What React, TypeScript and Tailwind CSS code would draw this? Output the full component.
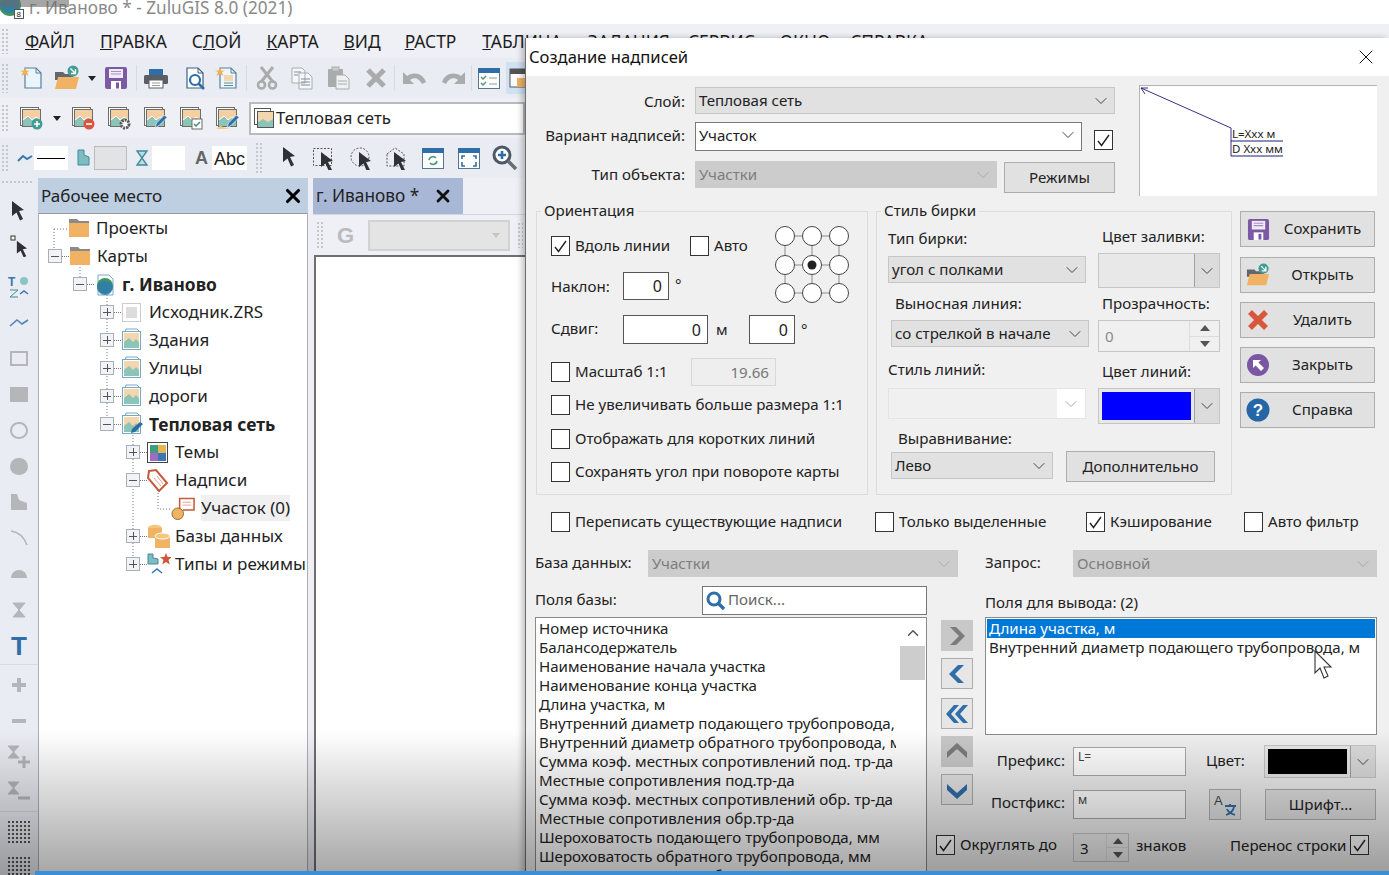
import type { ReactNode } from "react";
import { ChevronDown, ChevronUp, X } from "lucide-react";

const GRAY = "#a9abad";

function Ico({ w = 24, h = 24, className = "", children }: { w?: number; h?: number; className?: string; children: ReactNode }) {
  return (
    <svg width={w} height={h} viewBox={`0 0 ${w} ${h}`} className={"shrink-0 " + className}>
      {children}
    </svg>
  );
}

function Grip({ className = "" }: { className?: string }) {
  return <div className={"shrink-0 bg-[radial-gradient(#c3c7ce_1px,transparent_1.3px)] bg-[length:4px_4px] " + className} />;
}

/* toolbar pictures */
const Star = ({ x = 5, y = 5 }: { x?: number; y?: number }) => (
  <path transform={`translate(${x} ${y})`} d="M0-5L1.2-1.6 5-1.2 2-.0 3.5 4 0 2 -3.5 4 -2 0 -5-1.2 -1.2-1.6Z" fill="#f3b04c" />
);
const Floppy = ({ size = 24 }: { size?: number }) => (
  <svg width={size} height={size} viewBox="0 0 24 24" className="shrink-0">
    <path d="M1 3a2 2 0 012-2h18a2 2 0 012 2v18a2 2 0 01-2 2H3a2 2 0 01-2-2z" fill="#7b59a4" />
    <rect x="5" y="3" width="14" height="9" fill="#efeaf5" />
    <path d="M7 5.5h10M7 8h10" stroke="#a78fc4" strokeWidth="1.2" />
    <rect x="7" y="15" width="10" height="8" fill="#fff" />
    <rect x="12" y="16.5" width="3" height="6" fill="#7b59a4" />
  </svg>
);
const FolderArrow = ({ size = 26 }: { size?: number }) => (
  <svg width={size} height={size} viewBox="0 0 26 26" className="shrink-0">
    <path d="M1 7h8l2 2h8v6H1z" fill="#63676d" />
    <path d="M4 12h21l-3 12H1z" fill="#f1b263" />
    <circle cx="19" cy="6" r="5.5" fill="#3f9d93" />
    <path d="M16.5 3.5l4.5 4.5M21.5 4v4.5H17" stroke="#fff" strokeWidth="1.4" fill="none" />
  </svg>
);
const Doc = ({ children, fill = "#fff", stroke = "#3c5f80" }: { children?: ReactNode; fill?: string; stroke?: string }) => (
  <>
    <path d="M6 2h11l5 5v15H6z" fill={fill} stroke={stroke} strokeWidth="1.2" />
    <path d="M17 2v5h5" fill="none" stroke={stroke} strokeWidth="1" />
    {children}
  </>
);
const Layer = ({ children }: { children?: ReactNode }) => (
  <Ico>
    <rect x="1.5" y="1.5" width="18" height="18" fill="#fff" stroke="#6d6d6d" />
    <rect x="3.5" y="3.5" width="18" height="17" fill="#f5cfa2" stroke="#6d6d6d" />
    <path d="M4 20v-6l5-4 4 4 4-3 4 3v6z" fill="#8cc5b8" />
    <path d="M4 14l5-4 4 4 4-3 4 3" fill="none" stroke="#fff" strokeWidth="1" />
    {children}
  </Ico>
);
const LayerSmall = ({ pen = false }: { pen?: boolean }) => (
  <Ico w={22} h={24}>
    <path d="M4 4l1-3h11l3 3" fill="#fff" stroke="#76a9c4" />
    <rect x="1.5" y="3.5" width="18" height="18" fill="#fff" stroke="#76a9c4" />
    <rect x="3" y="5" width="15" height="15" fill="#f3d6ae" />
    <path d="M3 20v-6l5-4 4 4 3-3 3 3v6z" fill="#8cc5b8" />
    {pen && <path d="M10 21l1-4 8-7 3 2-8 8z" fill="#2e6da4" />}
  </Ico>
);
const PenBlue = () => <path d="M12 22l1.5-5 8-8 2.5 2.5-8 8z" fill="#2f6ea8" stroke="#fff" strokeWidth=".6" />;

function WindowIcon({ children }: { children: ReactNode }) {
  return (
    <Ico w={22} h={24}>
      <rect x=".5" y="2.5" width="21" height="20" fill="#fff" stroke="#5a7489" />
      <rect x="0" y="2" width="22" height="5" fill="#2f6ea8" />
      {children}
    </Ico>
  );
}
const Cursor = ({ x = 0, y = 0, s = 1 }: { x?: number; y?: number; s?: number }) => (
  <path transform={`translate(${x} ${y}) scale(${s})`} d="M1 1l12 9-5 1 4 8-3 1.5-3.5-8L1 16z" fill="#2f3033" />
);

function MenuItem({ first, rest, className = "" }: { first: string; rest: string; className?: string }) {
  return (
    <span className={"whitespace-nowrap " + className}>
      {rest[0] === "!" ? (
        <>
          {first}
          <span className="underline">{rest[1]}</span>
          {rest.slice(2)}
        </>
      ) : (
        <>
          <span className="underline">{first}</span>
          {rest}
        </>
      )}
    </span>
  );
}

function Toolbars() {
  return (
    <div className="bg-[#eef0f5]">
      <div className="h-[24px] bg-white flex items-start relative">
        <svg width="26" height="24" viewBox="0 0 26 24" className="shrink-0">
          <circle cx="10" cy="5" r="11" fill="#3e9260" />
          <path d="M0 6a10 10 0 0019 0 9 8 0 00-19 0" fill="#2f79b7" opacity=".75" />
          <rect x="14.5" y="9.5" width="9" height="9" fill="#fff" stroke="#555" />
          <text x="16.5" y="17" fontSize="8" fill="#222" fontFamily="Liberation Sans, sans-serif">8</text>
        </svg>
        <span className="ml-[3px] -mt-[3px] text-[17.2px] leading-[22px] text-[#8a8a8a] whitespace-nowrap">г. Иваново * - ZuluGIS 8.0 (2021)</span>
        <div className="absolute left-0 top-0 w-[69px] h-[7px] bg-[#6b6b6b]/60" />
      </div>

      <div className="h-[34px] flex items-center text-[17.4px] text-[#1d1d1d] relative">
        <Grip className="w-[8px] h-[26px] ml-[1px]" />
        <MenuItem first="Ф" rest="АЙЛ" className="ml-[16px]" />
        <MenuItem first="П" rest="РАВКА" className="ml-[25px]" />
        <MenuItem first="С" rest="!ЛОЙ" className="ml-[25px]" />
        <MenuItem first="К" rest="АРТА" className="ml-[25px]" />
        <MenuItem first="В" rest="ИД" className="ml-[25px]" />
        <MenuItem first="Р" rest="АСТР" className="ml-[24px]" />
        <MenuItem first="Т" rest="АБЛИЦА" className="ml-[26px]" />
        <MenuItem first="З" rest="АДАНИЯ" className="ml-[26px]" />
        <MenuItem first="С" rest="ЕРВИС" className="ml-[18px]" />
        <MenuItem first="О" rest="КНО" className="ml-[25px]" />
        <MenuItem first="С" rest="ПРАВКА" className="ml-[20px]" />
      </div>

      {/* row 1 */}
      <div className="h-[40px] flex items-center bg-[#e9ecf2]">
        <Grip className="w-[8px] h-[30px] ml-[1px]" />
        <Ico className="ml-[10px]" w={26}>
          <Doc fill="#e9f4fb" stroke="#5a7f9c" />
          <Star x={6} y={6} />
        </Ico>
        <div className="ml-[9px]"><FolderArrow /></div>
        <div className="ml-[8px] w-0 h-0 border-x-[4px] border-x-transparent border-t-[5px] border-t-[#222]" />
        <div className="ml-[8px]"><Floppy /></div>
        <div className="ml-[8px] w-px h-[26px] bg-[#d8dbe0]" />
        <Ico className="ml-[6px]" w={26}>
          <rect x="6" y="3" width="14" height="7" fill="#2f6ea8" />
          <rect x="1" y="9" width="24" height="9" rx="1.5" fill="#5a5f66" />
          <rect x="6" y="14" width="14" height="8" fill="#fff" stroke="#5a5f66" />
          <path d="M9 17h8M9 19.5h8" stroke="#999" />
        </Ico>
        <Ico className="ml-[12px]">
          <Doc><circle cx="14" cy="14" r="5" fill="#fff" stroke="#2f6ea8" strokeWidth="2.2" /><path d="M17.5 17.5L23 23" stroke="#2f6ea8" strokeWidth="2.6" /></Doc>
        </Ico>
        <Ico className="ml-[9px]" w={26}>
          <Doc fill="#eef6fb" stroke="#5a7f9c"><rect x="10" y="9" width="9" height="6" fill="#f3d6ae" /><path d="M10 17h9M10 19.5h9" stroke="#5a8f96" /></Doc>
          <Star x={6} y={6} />
        </Ico>
        <div className="ml-[6px] w-px h-[26px] bg-[#d8dbe0]" />
        <Ico className="ml-[8px]">
          <path d="M6 1l12 15M18 1L6 16" stroke={GRAY} strokeWidth="3" />
          <circle cx="6.5" cy="19" r="3.5" fill="none" stroke={GRAY} strokeWidth="2.6" />
          <circle cx="17.5" cy="19" r="3.5" fill="none" stroke={GRAY} strokeWidth="2.6" />
        </Ico>
        <Ico className="ml-[11px]">
          <path d="M2 2h10l3 3v12H2zM9 7h9l4 4v12H9z" fill="#f6f7f9" stroke={GRAY} />
          <path d="M4 6h7M4 9h4M11 13h9M11 16h9M11 19h9" stroke="#7d8ea0" />
        </Ico>
        <Ico className="ml-[12px]">
          <rect x="2" y="3" width="15" height="18" rx="1" fill={GRAY} />
          <rect x="6" y="1" width="7" height="4" fill="#c9cbce" stroke={GRAY} />
          <path d="M10 9h9l4 4v10H10z" fill="#eef0f3" stroke={GRAY} />
          <path d="M12 15h9M12 18h9" stroke={GRAY} />
        </Ico>
        <Ico className="ml-[14px]">
          <path d="M4 4l16 16M20 4L4 20" stroke={GRAY} strokeWidth="5" />
        </Ico>
        <div className="ml-[6px] w-px h-[26px] bg-[#d8dbe0]" />
        <Ico className="ml-[7px]" w={26}>
          <path d="M1 6v12h11l-4-4c4-3 9-2 12 4l4-2c-3-8-11-11-19-6z" fill={GRAY} />
        </Ico>
        <Ico className="ml-[12px]" w={26}>
          <path d="M25 6v12H14l4-4c-4-3-9-2-12 4l-4-2c3-8 11-11 19-6z" fill={GRAY} />
        </Ico>
        <div className="ml-[5px] w-px h-[26px] bg-[#d8dbe0]" />
        <div className="ml-[6px]">
          <WindowIcon>
            <path d="M3 11l2 2 3-3M3 17l2 2 3-3" stroke="#4d9a7c" strokeWidth="1.5" fill="none" />
            <path d="M11 12h8M11 18h8" stroke="#8a99a8" />
          </WindowIcon>
        </div>
        <div className="ml-[6px] w-[32px] h-[32px] bg-[#cfe2f3] flex items-center pl-[3px]">
          <Ico w={20}>
            <rect x="1" y="3" width="17" height="18" fill="#fff" stroke="#555" />
            <rect x="1" y="3" width="17" height="5" fill="#555" />
            <rect x="8" y="12" width="12" height="9" fill="#f1b263" />
          </Ico>
        </div>
      </div>

      {/* row 2 */}
      <div className="h-[40px] flex items-center bg-[#eef0f5]">
        <Grip className="w-[8px] h-[28px] ml-[1px]" />
        <div className="ml-[10px]"><Layer><circle cx="18" cy="18" r="5.5" fill="#3f9d93" /><path d="M15 18h6M18 15v6" stroke="#fff" strokeWidth="1.6" /></Layer></div>
        <div className="ml-[10px] w-0 h-0 border-x-[4px] border-x-transparent border-t-[5px] border-t-[#222]" />
        <div className="ml-[10px]"><Layer><circle cx="18" cy="18" r="5.5" fill="#d9553e" /><path d="M15 18h6" stroke="#fff" strokeWidth="1.6" /></Layer></div>
        <div className="ml-[12px]"><Layer><circle cx="18" cy="18" r="4" fill="#fff" stroke="#555" strokeWidth="3" strokeDasharray="2 1" /></Layer></div>
        <div className="ml-[12px]"><Layer><PenBlue /></Layer></div>
        <div className="ml-[12px]"><Layer><rect x="13" y="13" width="10" height="10" fill="#fff" stroke="#6d6d6d" /><path d="M15 18l2 2 4-4" stroke="#3f8f7c" strokeWidth="1.5" fill="none" /></Layer></div>
        <div className="ml-[12px]"><Layer><path d="M1 23l4-3 10 3z" fill="#f3cf85" /><PenBlue /></Layer></div>
        <div className="ml-[10px] w-[276px] h-[33px] bg-white border-2 border-[#b8babd] flex items-center pl-[2px]">
          <Ico w={22} h={22}>
            <rect x="1.5" y="1.5" width="16" height="16" fill="#fff" stroke="#555" />
            <rect x="4.5" y="4.5" width="16" height="16" fill="#f3d6ae" stroke="#555" />
            <path d="M5 20v-5l5-3 5 3 5-3v8z" fill="#8cc5b8" />
          </Ico>
          <span className="ml-[1px] text-[16.8px] text-[#1f1f1f] whitespace-nowrap">Тепловая сеть</span>
        </div>
      </div>

      {/* row 3 */}
      <div className="h-[40px] flex items-center bg-[#e9ecf2]">
        <Grip className="w-[8px] h-[28px] ml-[1px]" />
        <Ico className="ml-[8px]" w={16}>
          <path d="M1 15l5-5 4 3 5-3" fill="none" stroke="#3a77ad" strokeWidth="2" />
        </Ico>
        <div className="ml-[1px] w-[34px] h-[24px] bg-white flex items-center justify-center"><div className="w-[28px] h-px bg-black" /></div>
        <Ico className="ml-[8px]" w={16}>
          <path d="M2 4h6v5l5 2v8H2z" fill="#7fbcc2" stroke="#3f8b9c" />
        </Ico>
        <div className="ml-[2px] w-[33px] h-[24px] bg-[#e2e3e5] border border-[#bbb]" />
        <Ico className="ml-[8px]" w={14}>
          <path d="M2 5h10L2 19h10z" fill="#b9dde0" stroke="#3f8b9c" strokeWidth="1.4" />
        </Ico>
        <div className="ml-[3px] w-[33px] h-[24px] bg-white" />
        <span className="ml-[10px] w-[15px] text-[18px] font-bold text-[#666] font-['Liberation_Sans',sans-serif]">A</span>
        <div className="ml-[2px] w-[35px] h-[24px] bg-white text-[18px] leading-[26px] text-[#222] text-center font-['Liberation_Sans',sans-serif]">Abc</div>
        <Grip className="ml-[8px] w-[8px] h-[32px]" />
        <Ico className="ml-[19px]" w={16}><Cursor /></Ico>
        <Ico className="ml-[15px]" w={22}>
          <rect x=".5" y="2.5" width="18" height="17" fill="none" stroke="#555" strokeDasharray="2 1.5" />
          <Cursor x={7} y={5} />
        </Ico>
        <Ico className="ml-[15px]">
          <circle cx="10" cy="11" r="9" fill="none" stroke="#555" strokeDasharray="2 1.5" />
          <Cursor x={8} y={5} />
        </Ico>
        <Ico className="ml-[12px]" w={22}>
          <path d="M1 8l8-6 9 6v12H1z" fill="none" stroke="#555" strokeDasharray="2 1.5" />
          <Cursor x={7} y={5} />
        </Ico>
        <div className="ml-[14px]">
          <WindowIcon>
            <path d="M7 14a4 4 0 017-2M15 15a4 4 0 01-7 2" stroke="#4d9a7c" strokeWidth="1.8" fill="none" />
          </WindowIcon>
        </div>
        <div className="ml-[14px]">
          <WindowIcon>
            <path d="M4 13v-3h3M18 13v-3h-3M4 16v4h3M18 16v4h-3" stroke="#2f6ea8" strokeWidth="1.6" fill="none" />
          </WindowIcon>
        </div>
        <Ico className="ml-[12px]" w={26} h={26}>
          <circle cx="10" cy="10" r="8" fill="#fff" stroke="#4d5a66" strokeWidth="3" />
          <path d="M6 10h8M10 6v8" stroke="#2f6ea8" strokeWidth="2.6" />
          <path d="M16 16l8 8" stroke="#6a6e73" strokeWidth="3.5" />
        </Ico>
      </div>
    </div>
  );
}

function LeftStrip() {
  const g = "#b4b6ba";
  const cell = "h-[36px] shrink-0 flex items-center justify-center";
  return (
    <div className="w-[38px] shrink-0 bg-[#e9ecf2] flex flex-col overflow-hidden">
      <Grip className="h-[4px] w-[32px] ml-[1px] mt-[2px] mb-[9px]" />
      <div className="h-[35px] shrink-0 flex items-center justify-center"><Ico w={16} h={22}><Cursor /></Ico></div>
      <div className="h-[34px] shrink-0 flex items-center justify-center">
        <Ico w={22}>
          <rect x="3" y="3" width="4" height="4" fill="#fff" stroke="#333" />
          <Cursor x={8} y={7} s={.85} />
        </Ico>
      </div>
      <div className="h-[42px] shrink-0 pt-[6px] flex items-center justify-center">
        <Ico>
          <text x="1" y="12" fontSize="12" fontWeight="700" fill="#3a77ad" fontFamily="Liberation Sans, sans-serif">T</text>
          <circle cx="17" cy="7" r="4" fill="#8cc5c8" />
          <path d="M3 16h8L3 23h8" stroke="#3f8b9c" fill="none" />
          <path d="M13 20l4-3 4 3" stroke="#3a77ad" fill="none" strokeWidth="1.5" />
        </Ico>
      </div>
      <div className={cell}><Ico h={16}><path d="M3 12l7-6 5 4 6-4" fill="none" stroke="#4d86b8" strokeWidth="1.6" /></Ico></div>
      <div className={cell}><div className="w-[18px] h-[15px] border-2 border-[#b4b6ba]" /></div>
      <div className={cell}><div className="w-[18px] h-[15px] bg-[#b4b6ba]" /></div>
      <div className={cell}><div className="w-[18px] h-[17px] rounded-full border-2 border-[#b4b6ba]" /></div>
      <div className={cell}><div className="w-[18px] h-[17px] rounded-full bg-[#b4b6ba]" /></div>
      <div className={cell}><Ico w={18} h={18}><path d="M1 1h6l2 6 8 3v7H1z" fill={g} /></Ico></div>
      <div className={cell}><Ico w={20} h={18}><path d="M2 2c7 1 13 6 16 14" fill="none" stroke={g} strokeWidth="1.6" /></Ico></div>
      <div className={cell}><Ico w={20} h={12}><path d="M2 10a8 8 0 0116 0z" fill={g} /></Ico></div>
      <div className={cell}><Ico w={14} h={16}><path d="M1 1h12L1 15h12z" fill={g} stroke={g} /></Ico></div>
      <div className={cell}><span className="text-[26px] font-bold text-[#2f6ea8] font-['Liberation_Sans',sans-serif]">T</span></div>
      <div className="h-[3px] shrink-0 border-t border-[#d8dbe0]" />
      <div className={cell}><Ico w={16} h={16}><path d="M8 1v14M1 8h14" stroke={g} strokeWidth="4" /></Ico></div>
      <div className={cell}><div className="w-[14px] h-[4px] bg-[#b4b6ba]" /></div>
      <div className={cell}>
        <Ico><path d="M1 1h11L1 13h11z" fill={g} stroke={g} /><path d="M17 11v12M11 17h12" stroke={g} strokeWidth="3" /></Ico>
      </div>
      <div className={cell}>
        <Ico><path d="M1 1h11L1 13h11z" fill={g} stroke={g} /><path d="M11 17h12" stroke={g} strokeWidth="3" /></Ico>
      </div>
      <div className="h-[3px] shrink-0 border-t border-[#d8dbe0]" />
      <div className={cell}><div className="w-[24px] h-[24px] bg-[radial-gradient(#555_1px,transparent_1.3px)] bg-[length:4px_4px]" /></div>
      <div className={cell}><div className="w-[24px] h-[24px] bg-[radial-gradient(#555_1px,transparent_1.3px)] bg-[length:4px_4px]" /></div>
    </div>
  );
}

function Expander({ open }: { open: boolean }) {
  return (
    <span className="relative w-[14px] h-[14px] shrink-0 bg-[#f1f3f6] border border-[#a9aeb8] flex items-center justify-center">
      <span className="absolute w-[8px] h-px bg-[#555]" />
      {!open && <span className="absolute h-[8px] w-px bg-[#555]" />}
    </span>
  );
}

function TreeRow({ indent, open, icon, text, bold, hi }: { indent: string; open?: boolean; icon: ReactNode; text: string; bold?: boolean; hi?: boolean }) {
  return (
    <div className={"h-[28px] flex items-center " + indent}>
      {open !== undefined && (
        <>
          <Expander open={open} />
          <span className="w-[7px] shrink-0 border-t border-dotted border-[#777]" />
        </>
      )}
      <div className={open === undefined ? "shrink-0" : "w-[22px] shrink-0"}>{icon}</div>
      <span className={"ml-[6px] whitespace-nowrap " + (bold ? "font-bold text-[17.4px] " : "") + (hi ? "bg-[#f0f0f0] " : "")}>{text}</span>
    </div>
  );
}

const FolderTree = () => (
  <Ico w={22} h={22}>
    <path d="M1 2h8l2 2h10v4H1z" fill="#8a8a8a" />
    <path d="M1 6h20v14H1z" fill="#f1b263" />
  </Ico>
);

function WorkPanel() {
  return (
    <div className="w-[270px] shrink-0 flex flex-col">
      <div className="h-[35px] bg-[#bfcfe2] flex items-center justify-between pl-[3px] pr-[4px]">
        <span className="text-[17px] text-[#222]">Рабочее место</span>
        <X size={22} strokeWidth={3.4} className="text-black" />
      </div>
      <div className="relative flex-1 bg-white border border-t-[#999] border-x-[#aab0b8] border-b-0 text-[17px] text-[#222] overflow-hidden">
        <svg width="150" height="360" className="absolute left-0 top-0" fill="none" stroke="#777" strokeDasharray="1 2">
          <path d="M15 15V38M15 15h14M41 50V71M68 78V207M94 218V351M119 267V295h14" />
        </svg>
        <div className="relative">
          <TreeRow indent="ml-[29px]" icon={<FolderTree />} text="Проекты" />
          <TreeRow indent="ml-[9px]" open icon={<FolderTree />} text="Карты" />
          <TreeRow indent="ml-[34px]" open icon={
            <Ico w={22} h={24}>
              <path d="M4 3h11l4 4v16H4z" fill="#fff" stroke="#76a9c4" />
              <circle cx="11" cy="14" r="8" fill="#3f9660" />
              <path d="M3 15a8 8 0 0016 0 8 6 0 00-16 0" fill="#2f79b7" opacity=".8" />
            </Ico>
          } text="г. Иваново" bold />
          <TreeRow indent="ml-[61px]" open={false} icon={
            <Ico w={22} h={24}>
              <rect x="1.5" y="3.5" width="18" height="18" fill="#fff" stroke="#ccc" />
              <rect x="5" y="7" width="11" height="11" fill="#ddd" />
            </Ico>
          } text="Исходник.ZRS" />
          <TreeRow indent="ml-[61px]" open={false} icon={<LayerSmall />} text="Здания" />
          <TreeRow indent="ml-[61px]" open={false} icon={<LayerSmall />} text="Улицы" />
          <TreeRow indent="ml-[61px]" open={false} icon={<LayerSmall />} text="дороги" />
          <TreeRow indent="ml-[61px]" open icon={<LayerSmall pen />} text="Тепловая сеть" bold />
          <TreeRow indent="ml-[87px]" open={false} icon={
            <Ico w={22} h={24}>
              <rect x=".5" y="2.5" width="20" height="20" fill="#fff" stroke="#444" />
              <rect x="3" y="5" width="8" height="8" fill="#3f9d7f" />
              <rect x="11" y="5" width="8" height="8" fill="#e5b84f" />
              <rect x="3" y="13" width="8" height="8" fill="#a06bc0" />
              <rect x="11" y="13" width="8" height="8" fill="#3b76b5" />
            </Ico>
          } text="Темы" />
          <TreeRow indent="ml-[87px]" open icon={
            <Ico w={22} h={24}>
              <path d="M2 3l7-1 11 13-8 8L1 10z" fill="#fff" stroke="#c65a3c" strokeWidth="2" />
              <path d="M7 10l7 8M10 8l6 8" stroke="#e3a48f" />
            </Ico>
          } text="Надписи" />
          <TreeRow indent="ml-[132px]" icon={
            <svg width="24" height="26" viewBox="0 0 25 26" className="shrink-0">
              <path d="M9 3h15v12H13l-4 3z" fill="#fff" stroke="#c65a3c" strokeWidth="1.6" />
              <path d="M12 7h9M12 10h9" stroke="#e3a48f" />
              <circle cx="7" cy="19" r="6" fill="#f1b263" stroke="#8a6a35" />
            </svg>
          } text="Участок (0)" hi />
          <TreeRow indent="ml-[87px]" open={false} icon={
            <Ico w={24} h={26}>
              <ellipse cx="8" cy="5" rx="7" ry="3.2" fill="#f6c67e" />
              <rect x="1" y="5" width="14" height="10" fill="#f1b263" />
              <rect x="8" y="13" width="15" height="12" fill="#f1b263" />
              <ellipse cx="15.5" cy="13" rx="7.5" ry="3" fill="#f6c67e" stroke="#fff" />
            </Ico>
          } text="Базы данных" />
          <TreeRow indent="ml-[87px]" open={false} icon={
            <Ico w={24} h={26}>
              <path d="M1 3h5v4l5 1v5H1z" fill="#7fbcc2" stroke="#3f8b9c" />
              <path d="M19 2l1.6 4H25l-3.5 3 1.3 4.5L19 11l-3.8 2.5L16.5 9 13 6h4.4z" fill="#d0563a" />
              <path d="M5 22l5-4 5 4" stroke="#3a77ad" strokeWidth="1.6" fill="none" />
            </Ico>
          } text="Типы и режимы" />
        </div>
      </div>
    </div>
  );
}

function MapArea() {
  return (
    <div className="flex-1 flex flex-col ml-[5px]">
      <div className="h-[36px] w-[150px] bg-[#a9b7d7] flex items-center pl-[3px] pr-[10px] justify-between text-[17.3px] text-[#222]">
        <span className="whitespace-nowrap">г. Иваново *</span>
        <X size={20} strokeWidth={3.4} className="text-[#111]" />
      </div>
      <div className="h-[41px] bg-[#eef0f5] flex items-center border-t border-[#d4d6da]">
        <Grip className="ml-[3px] w-[8px] h-[28px]" />
        <span className="ml-[13px] w-[28px] text-[22px] font-bold text-[#b9bbbe] font-['Liberation_Sans',sans-serif]">G</span>
        <div className="ml-[3px] w-[142px] h-[31px] bg-[#e4e4e4] border-2 border-[#d2d2d2] flex items-center justify-end pr-[8px]">
          <div className="w-0 h-0 border-x-[4px] border-x-transparent border-t-[5px] border-t-[#c5c5c5]" />
        </div>
        <Grip className="ml-[7px] w-[6px] h-[26px]" />
      </div>
      <div className="flex-1 bg-white border-l-2 border-t-2 border-[#6f6f6f] ml-px" />
    </div>
  );
}

/* ---- dialog controls ---- */

function Check({ on, className = "" }: { on?: boolean; className?: string }) {
  return (
    <span className={"w-[19px] h-[20px] shrink-0 bg-white border border-[#333] flex items-center justify-center " + className}>
      {on && (
        <svg width="15" height="15" viewBox="0 0 15 15"><path d="M2 8l3.5 4.5L13 2" fill="none" stroke="#222" strokeWidth="1.4" /></svg>
      )}
    </span>
  );
}

function CheckLine({ on, text, className = "" }: { on?: boolean; text: string; className?: string }) {
  return (
    <div className={"flex items-center h-[20px] " + className}>
      <Check on={on} />
      <span className="ml-[5px] pb-[2px] whitespace-nowrap">{text}</span>
    </div>
  );
}

function Select({ text, className, tone = "gray" }: { text?: string; className: string; tone?: "gray" | "white" | "off" }) {
  const look = tone === "gray" ? "bg-[#e1e1e1] border border-[#c6c6c6]" : tone === "white" ? "bg-white border border-[#7a7a7a]" : "bg-[#cccccc] border border-[#cccccc]";
  return (
    <div className={"flex items-center justify-between shrink-0 pl-[3px] pr-[3px] " + look + " " + className}>
      <span className={"whitespace-nowrap " + (tone === "off" ? "text-[#7d7d7d]" : "")}>{text}</span>
      <ChevronDown size={20} strokeWidth={1.2} className={tone === "off" ? "text-[#a8a8a8]" : "text-[#444]"} />
    </div>
  );
}

function Btn({ text, className }: { text: string; className: string }) {
  return <div className={"shrink-0 bg-[#e1e1e1] border border-[#adadad] flex items-center justify-center whitespace-nowrap " + className}>{text}</div>;
}

function ColorBox({ className, swatch }: { className: string; swatch: string }) {
  return (
    <div className={"shrink-0 flex items-stretch bg-[#e8e8e8] border border-[#c6c6c6] p-[3px] " + className}>
      <div className={"flex-1 " + swatch} />
      <div className="w-[25px] ml-[3px] -my-[3px] -mr-[3px] bg-[#dcdcdc] border-l border-[#a0a0a0] flex items-center justify-center">
        <ChevronDown size={20} strokeWidth={1.2} className="text-[#444]" />
      </div>
    </div>
  );
}

function Spin({ value, className, w = "w-[25px]", off }: { value: string; className: string; w?: string; off?: boolean }) {
  return (
    <div className={"shrink-0 flex items-center border border-[#c6c6c6] pl-[6px] " + (off ? "bg-[#f0f0f0] text-[#8a8a8a] " : "bg-[#efefef] ") + className}>
      <span className="flex-1">{value}</span>
      <div className={"self-stretch flex flex-col " + w}>
        <div className="flex-1 flex items-center justify-center border-b border-[#ddd] border-l">
          <div className="w-0 h-0 border-x-[5px] border-x-transparent border-b-[6px] border-b-[#555]" />
        </div>
        <div className="flex-1 flex items-center justify-center border-l border-[#ddd]">
          <div className="w-0 h-0 border-x-[5px] border-x-transparent border-t-[6px] border-t-[#555]" />
        </div>
      </div>
    </div>
  );
}

function Num({ value, className }: { value: string; className: string }) {
  return <div className={"shrink-0 bg-white border border-[#555] flex items-center justify-end pr-[6px] text-[16px] text-[#222] " + className}>{value}</div>;
}

function SideBtn({ icon, text, className = "" }: { icon: ReactNode; text: string; className?: string }) {
  return (
    <div className={"h-[36px] w-[135px] bg-[#e1e1e1] border border-[#adadad] flex items-center pl-[5px] " + className}>
      <span className="w-[24px] flex justify-center">{icon}</span>
      <span className="flex-1 text-center pl-[1px] pb-[2px]">{text}</span>
    </div>
  );
}

function Arrow({ d, className, off }: { d: string; className?: string; off?: boolean }) {
  return (
    <div className={"h-[31px] w-[32px] flex items-center justify-center border " + (off ? "bg-[#c8c8c8] border-[#c8c8c8] " : "bg-[#e6e6e6] border-[#adadad] ") + className}>
      <svg width="26" height="22" viewBox="0 0 26 22"><path d={d} fill={off ? "#7c7c7c" : "#2f6ea8"} /></svg>
    </div>
  );
}

const FIELDS = [
  "Номер источника",
  "Балансодержатель",
  "Наименование начала участка",
  "Наименование конца участка",
  "Длина участка, м",
  "Внутренний диаметр подающего трубопровода, м",
  "Внутренний диаметр обратного трубопровода, м",
  "Сумма коэф. местных сопротивлений под. тр-да",
  "Местные сопротивления под.тр-да",
  "Сумма коэф. местных сопротивлений обр. тр-да",
  "Местные сопротивления обр.тр-да",
  "Шероховатость подающего трубопровода, мм",
  "Шероховатость обратного трубопровода, мм",
  "Эквивалентная длина обратного тр-да",
];

function Dialog() {
  return (
    <div className="absolute left-[525px] top-[38px] w-[864px] h-[837px] bg-[#f0f0f0] border-l border-[#6d6d6d] shadow-[-3px_0_6px_rgba(0,0,0,0.25)] text-[15.1px] text-[#222] overflow-hidden">
      <div className="h-[38px] bg-white flex items-center justify-between pl-[3px] pr-[11px]">
        <span className="text-[16.6px] text-[#111]">Создание надписей</span>
        <X size={24} strokeWidth={1} className="text-[#111]" />
      </div>

      {/* top form */}
      <div className="flex pt-[9px]">
        <div className="w-[613px] shrink-0 pt-[2px]">
          <div className="flex">
            <span className="w-[159px] mr-[10px] h-[27px] leading-[28px] text-right">Слой:</span>
            <Select text="Тепловая сеть" className="w-[420px] h-[27px]" />
          </div>
          <div className="flex mt-[8px]">
            <span className="w-[159px] mr-[10px] h-[29px] leading-[27px] text-right">Вариант надписей:</span>
            <Select text="Участок" tone="white" className="w-[387px] h-[29px] pb-[3px]" />
            <Check on className="ml-[12px] mt-[8px]" />
          </div>
          <div className="flex items-start mt-[10px]">
            <span className="w-[159px] mr-[10px] h-[27px] leading-[27px] text-right">Тип объекта:</span>
            <Select text="Участки" tone="off" className="w-[302px] h-[27px]" />
            <Btn text="Режимы" className="ml-[7px] mt-[1px] w-[111px] h-[31px]" />
          </div>
        </div>
        <div className="w-[238px] h-[111px] bg-white border-l border-t border-[#b5b5b5]">
          <svg width="238" height="111" viewBox="0 0 238 111">
            <path d="M1 2L91 42V70" fill="none" stroke="#1c1c78" strokeWidth=".9" />
            <path d="M8 2L1 2 5 8" fill="none" stroke="#1c1c78" strokeWidth=".9" />
            <path d="M91 55H143M91 70H143" stroke="#1c1c78" />
            <text x="92" y="52" fontSize="11.5" fill="#222">L=Xxx м</text>
            <text x="92" y="67" fontSize="11.5" fill="#222">D Xxx мм</text>
          </svg>
        </div>
      </div>

      {/* groups and side buttons */}
      <div className="flex pl-[10px] mt-[15px] gap-[8px]">
        <div className="relative w-[332px] h-[284px] shrink-0 border border-[#dcdcdc] pl-[14px]">
          <span className="absolute -top-[12px] left-[4px] bg-[#f0f0f0] px-[3px] leading-[20px]">Ориентация</span>
          <div className="flex h-[92px]">
            <div className="w-[224px] pt-[24px]">
              <div className="flex">
                <CheckLine on text="Вдоль линии" className="w-[139px]" />
                <CheckLine text="Авто" />
              </div>
              <div className="flex items-center mt-[16px] h-[28px]">
                <span className="w-[72px]">Наклон:</span>
                <Num value="0" className="w-[46px] h-[28px]" />
                <span className="ml-[6px] -mt-[4px]">°</span>
              </div>
            </div>
            <svg width="78" height="78" viewBox="0 0 78 78" className="mt-[14px] -ml-[1px]">
              <path d="M11 10h54M11 39h54M11 67h54M11 10v57M38 10v57M65 10v57" stroke="#8a8a8a" />
              {[10, 39, 67].map((cy) =>
                [11, 38, 65].map((cx) => <circle key={`${cx}-${cy}`} cx={cx} cy={cy} r="9.5" fill="#fff" stroke="#444" />)
              )}
              <circle cx="38" cy="39" r="4.5" fill="#222" />
            </svg>
          </div>
          <div className="flex items-center mt-[11px] h-[29px]">
            <span className="w-[72px] pb-[2px]">Сдвиг:</span>
            <Num value="0" className="w-[85px] h-[29px]" />
            <span className="ml-[8px] w-[33px]">м</span>
            <Num value="0" className="w-[46px] h-[29px]" />
            <span className="ml-[6px]">°</span>
          </div>
          <div className="flex items-center mt-[14px] h-[28px]">
            <CheckLine text="Масштаб 1:1" className="w-[140px]" />
            <div className="w-[85px] h-[28px] bg-[#eeeeee] border border-[#d8d8d8] flex items-center justify-end pr-[6px] text-[#777]">19.66</div>
          </div>
          <CheckLine text="Не увеличивать больше размера 1:1" className="mt-[9px]" />
          <CheckLine text="Отображать для коротких линий" className="mt-[14px]" />
          <CheckLine text="Сохранять угол при повороте карты" className="mt-[13px]" />
        </div>

        <div className="relative w-[356px] h-[284px] shrink-0 border border-[#dcdcdc] pl-[11px]">
          <span className="absolute -top-[12px] left-[4px] bg-[#f0f0f0] px-[3px] leading-[20px]">Стиль бирки</span>
          <div className="flex h-[212px]">
            <div className="w-[210px] shrink-0">
              <div className="mt-[17px] h-[20px] leading-[18px]">Тип бирки:</div>
              <Select text="угол с полками" className="mt-[7px] w-[198px] h-[27px]" />
              <div className="mt-[11px] ml-[7px] h-[20px] leading-[18px]">Выносная линия:</div>
              <Select text="со стрелкой в начале" className="mt-[6px] ml-[3px] w-[198px] h-[27px]" />
              <div className="mt-[13px] h-[20px] leading-[18px]">Стиль линий:</div>
              <div className="mt-[8px] w-[198px] h-[31px] bg-[#f0f0f0] border border-[#e4e4e4] flex justify-end">
                <div className="w-[28px] bg-white flex items-center justify-center">
                  <ChevronDown size={20} strokeWidth={1.2} className="text-[#a8a8a8]" />
                </div>
              </div>
            </div>
            <div className="w-[122px] shrink-0">
              <div className="mt-[15px] ml-[4px] h-[20px] leading-[18px] whitespace-nowrap">Цвет заливки:</div>
              <ColorBox swatch="bg-[#e8e8e8]" className="mt-[6px] w-[122px] h-[35px]" />
              <div className="mt-[6px] ml-[4px] h-[20px] leading-[18px]">Прозрачность:</div>
              <Spin off value="0" className="mt-[6px] w-[122px] h-[32px]" w="w-[30px]" />
              <div className="mt-[10px] ml-[4px] h-[20px] leading-[18px] whitespace-nowrap">Цвет линий:</div>
              <ColorBox swatch="bg-[#0000ff]" className="mt-[6px] w-[122px] h-[36px]" />
            </div>
          </div>
          <div className="mt-[5px] ml-[10px] h-[20px] leading-[18px]">Выравнивание:</div>
          <div className="flex items-start mt-[2px]">
            <Select text="Лево" className="ml-[3px] mt-[1px] w-[162px] h-[27px]" />
            <Btn text="Дополнительно" className="ml-[13px] w-[149px] h-[31px]" />
          </div>
        </div>

        <div className="flex flex-col">
          <SideBtn icon={<Floppy size={23} />} text="Сохранить" />
          <SideBtn icon={<FolderArrow size={24} />} text="Открыть" className="mt-[10px]" />
          <SideBtn
            icon={<svg width="22" height="22" viewBox="0 0 22 22"><path d="M3 3l16 16M19 3L3 19" stroke="#d8563c" strokeWidth="5.5" /></svg>}
            text="Удалить"
            className="mt-[9px]"
          />
          <SideBtn
            icon={
              <svg width="24" height="24" viewBox="0 0 24 24">
                <circle cx="12" cy="12" r="11" fill="#7a56a3" />
                <path d="M7 7h8l-2.6 2.6L18 15l-3 3-5.4-5.6L7 15z" fill="#fff" />
              </svg>
            }
            text="Закрыть"
            className="mt-[9px]"
          />
          <SideBtn
            icon={
              <svg width="24" height="24" viewBox="0 0 24 24">
                <circle cx="12" cy="12" r="11.5" fill="#2566a6" />
                <text x="12" y="18" fontSize="17" fontWeight="700" fill="#fff" textAnchor="middle" fontFamily="Liberation Sans, sans-serif">?</text>
              </svg>
            }
            text="Справка"
            className="mt-[9px]"
          />
        </div>
      </div>

      {/* flags */}
      <div className="flex mt-[17px] pl-[25px]">
        <CheckLine text="Переписать существующие надписи" className="w-[324px]" />
        <CheckLine text="Только выделенные" className="w-[211px]" />
        <CheckLine on text="Кэширование" className="w-[158px]" />
        <CheckLine text="Авто фильтр" />
      </div>

      {/* database row */}
      <div className="flex items-center mt-[18px] pl-[9px]">
        <span className="w-[113px] pb-[2px]">База данных:</span>
        <Select text="Участки" tone="off" className="w-[310px] h-[27px]" />
        <span className="ml-[27px] w-[88px] pb-[2px]">Запрос:</span>
        <Select text="Основной" tone="off" className="w-[304px] h-[27px]" />
      </div>

      {/* bottom */}
      <div className="flex pl-[9px]">
        <div className="w-[392px] shrink-0 pt-[9px]">
          <div className="flex items-center h-[29px]">
            <span className="w-[167px] pb-[2px]">Поля базы:</span>
            <div className="w-[225px] h-[29px] bg-white border border-[#777] flex items-center pl-[2px] text-[#666]">
              <svg width="21" height="21" viewBox="0 0 21 21">
                <circle cx="9" cy="9" r="6" fill="#fff" stroke="#2f6ea8" strokeWidth="3" />
                <path d="M13 13l6 6" stroke="#2f6ea8" strokeWidth="3.4" />
              </svg>
              <span className="ml-[2px] pb-[3px]">Поиск...</span>
            </div>
          </div>
          <div className="mt-[2px] h-[300px] bg-white border border-[#8a8a8a] flex overflow-hidden">
            <div className="w-[360px] shrink-0 pt-[1px] pl-[3px] overflow-hidden leading-[19px] whitespace-nowrap">
              {FIELDS.map((f) => (
                <div key={f} className="h-[19px]">{f}</div>
              ))}
            </div>
            <div className="w-[29px] shrink-0 flex flex-col items-center pl-[4px]">
              <ChevronUp size={18} strokeWidth={2} className="mt-[6px] text-[#555]" />
              <div className="mt-[4px] w-[25px] h-[34px] bg-[#cdcdcd]" />
            </div>
          </div>
        </div>

        <div className="flex-1 ml-[14px] flex flex-col">
          <div className="flex">
            <div className="flex flex-col w-[32px] pt-[43px] gap-[7px]">
              <Arrow off d="M6 2h6l9 9-9 9H6l9-9z" className="" />
              <Arrow d="M20 2h-6l-9 9 9 9h6l-9-9z" className="mt-[0px]" />
              <Arrow d="M15 2h-5l-8 9 8 9h5l-8-9zM24 2h-5l-8 9 8 9h5l-8-9z" className="mt-[2px]" />
              <Arrow off d="M3 17v-6l10-9 10 9v6l-10-9z" />
              <Arrow d="M3 5v6l10 9 10-9V5l-10 9z" />
            </div>
            <div className="ml-[12px] w-[392px] shrink-0">
              <div className="mt-[16px] h-[20px] leading-[18px]">Поля для вывода: (2)</div>
              <div className="mt-[4px] h-[118px] bg-white border border-[#8a8a8a] p-px leading-[19px] whitespace-nowrap">
                <div className="h-[19px] bg-[#0078d7] text-white pl-[2px]">Длина участка, м</div>
                <div className="h-[19px] pl-[2px]">Внутренний диаметр подающего трубопровода, м</div>
              </div>
              <div className="flex items-center mt-[10px] h-[33px]">
                <span className="w-[80px] text-right pb-[3px]">Префикс:</span>
                <div className="ml-[8px] w-[113px] h-[29px] bg-white border border-[#a8a8a8] pl-[4px] text-[12px] text-[#444]">L=</div>
                <span className="ml-[20px] w-[58px] pb-[3px]">Цвет:</span>
                <ColorBox swatch="bg-black" className="w-[112px] h-[33px]" />
              </div>
              <div className="flex items-center mt-[11px] h-[31px]">
                <span className="w-[80px] text-right pb-[4px]">Постфикс:</span>
                <div className="ml-[8px] w-[113px] h-[29px] bg-white border border-[#a8a8a8] pl-[4px] text-[12px] text-[#444]">м</div>
                <div className="ml-[23px] w-[32px] h-[31px] bg-[#e1e1e1] border border-[#adadad] flex items-center justify-center">
                  <svg width="26" height="26" viewBox="0 0 26 26">
                    <text x="2" y="13" fontSize="13" fill="#444" fontFamily="Liberation Sans, sans-serif">A</text>
                    <path d="M13 14h11M18 12v3M22 15c-1 5-5 7-8 8M15 17c1 3 5 5 8 6" stroke="#2f6ea8" strokeWidth="1.8" fill="none" />
                  </svg>
                </div>
                <Btn text="Шрифт..." className="ml-[24px] w-[111px] h-[31px]" />
              </div>
            </div>
          </div>
          <div className="flex items-start mt-[13px] h-[29px] -ml-[5px] leading-[24px]">
            <CheckLine on text="Округлять до" className="w-[137px] mt-[2px]" />
            <Spin value="3" className="w-[56px] h-[29px]" w="w-[22px]" />
            <span className="ml-[7px] w-[94px]">знаков</span>
            <span className="whitespace-nowrap w-[120px]">Перенос строки</span>
            <Check on className="mt-[2px]" />
          </div>
        </div>
      </div>
    </div>
  );
}

export default function App() {
  return (
    <div className="relative w-[1389px] h-[875px] overflow-hidden bg-white font-['Noto_Sans',sans-serif]">
      <Toolbars />
      <div className="flex h-[697px] bg-[#eef0f5]">
        <LeftStrip />
        <WorkPanel />
        <MapArea />
      </div>
      <Dialog />

      {/* mouse pointer */}
      <svg width="20" height="30" viewBox="0 0 20 30" className="absolute left-[1314px] top-[650px]">
        <path d="M1 1v22l5-5 4 10 4-2-4-9h7z" fill="#fff" stroke="#333" strokeWidth="1.1" />
      </svg>

      {/* video overlay: fade at the bottom and the player bar */}
      <div className="absolute inset-x-0 top-[730px] h-[145px] bg-gradient-to-b from-transparent to-black/35 pointer-events-none" />
      <div className="absolute left-[35px] right-0 bottom-0 h-[4px] bg-[#3a8fd6]" />
    </div>
  );
}
